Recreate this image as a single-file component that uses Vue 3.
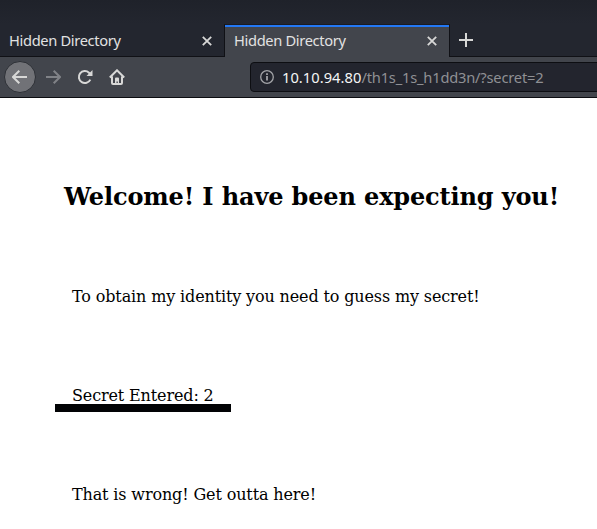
<script setup>
const tabs = [
  { title: 'Hidden Directory', active: false },
  { title: 'Hidden Directory', active: true },
]
</script>

<template>
  <div class="window">
    <header class="tabstrip">
      <div v-for="(tab, i) in tabs" :key="i" class="tab" :class="{ active: tab.active }">
        <span class="title">{{ tab.title }}</span>
        <svg class="close" width="10" height="10" viewBox="0 0 10 10">
          <path d="M.8.8l8.4 8.4M9.2.8L.8 9.2" />
        </svg>
      </div>
      <svg class="plus" width="14" height="14" viewBox="0 0 14 14"><path d="M7 0v14M0 7h14" /></svg>
    </header>

    <nav class="toolbar">
      <button class="back" aria-label="Back">
        <svg width="16" height="16" viewBox="0 0 16 16"><path d="M15 8H1.5M7.3 1.7L1 8l6.3 6.3" /></svg>
      </button>
      <svg class="forward" width="16" height="16" viewBox="0 0 16 16"><path d="M1 8h13.500M8.700 1.700L15 8l-6.300 6.300" /></svg>
      <svg class="reload" width="16" height="16" viewBox="0 0 16 16">
        <path d="M13.300 10.600A6 6 0 1 1 12 3.700L13.500 5.200" />
        <path class="solid" d="M15.500 1v6h-6z" />
      </svg>
      <svg class="home" width="16" height="16" viewBox="0 0 16 16">
        <path d="M.8 8.500L8 1.300l7.200 7.200M3 7.500V14q0 1 1 1h8q1 0 1-1V7.500" />
        <path class="solid" d="M6 15V9.500Q6 8.500 7 8.500h2q1 0 1 1V15H8.800v-2.500H7.500V15z" />
      </svg>
      <div class="url">
        <svg class="info" width="14" height="14" viewBox="0 0 14 14">
          <circle cx="7" cy="7" r="6.300" />
          <path d="M7 6v4.500M7 3.200v1.700" />
        </svg>
        <span class="host">10.10.94.80</span><span class="path">/th1s_1s_h1dd3n/?secret=2</span>
      </div>
    </nav>

    <main class="page">
      <h1>Welcome! I have been expecting you!</h1>
      <p>To obtain my identity you need to guess my secret!</p>
      <p class="secret">Secret Entered: 2</p>
      <p>That is wrong! Get outta here!</p>
    </main>
  </div>
</template>

<style>
body { background: #fff; overflow: hidden; }
</style>

<style scoped>
.window { width: 597px; height: 529px; overflow: hidden; background: #fff; }
svg { display: block; flex: none; fill: none; stroke: #d8d8d7; stroke-width: 2; }
.tabstrip {
  box-sizing: border-box;
  height: 57px;
  padding-top: 24px;
  display: flex;
  background: linear-gradient(#1f222a, #23262f 24px);
  border-bottom: 1px solid #101116;
  font: 14.67px "Noto Sans", sans-serif;
  color: #e2e2e2;
}
.tab {
  box-sizing: border-box;
  width: 224px;
  height: 32px;
  padding: 2px 12px 0 9px;
  display: flex;
  align-items: center;
  justify-content: space-between;
}
.tab.active {
  width: 226px;
  height: 33px;
  padding: 0 12px 0 9px;
  border: 1px solid #101116;
  border-top: 1px solid #191a22;
  border-bottom: 0;
  background: linear-gradient(#2378f4 2px, #42454c 2px);
}
.close { stroke-width: 1.800; }
.title { padding-bottom: 2px; line-height: 20px; letter-spacing: -0.34px; white-space: nowrap; }
.plus { margin: 9px 0 0 9px; }
.toolbar {
  box-sizing: border-box;
  height: 41px;
  padding-left: 4px;
  display: flex;
  align-items: center;
  background: #42454c;
  border-bottom: 1px solid #0c0d11;
}
.back {
  box-sizing: border-box;
  width: 32px;
  height: 32px;
  flex: none;
  padding: 0;
  display: flex;
  align-items: center;
  justify-content: center;
  border: 1px solid #2d3036;
  border-radius: 50%;
  background: #717277;
}
.forward { margin-left: 9px; stroke: #808287; }
.reload { margin-left: 16px; }
.home { margin-left: 16px; }
.solid { fill: #d8d8d7; stroke: none; }
.url {
  box-sizing: border-box;
  width: 360px;
  height: 30px;
  flex: none;
  margin-left: 125px;
  padding-left: 9px;
  display: flex;
  align-items: center;
  border: 1px solid #0d0e12;
  border-radius: 4px;
  background: #23252e;
  font: 14.67px "Noto Sans", sans-serif;
  white-space: nowrap;
}
.info { margin-right: 8px; stroke: #a3a4a8; stroke-width: 1.300; }
.info path { stroke-width: 1.800; }
.host { color: #f5f5f5; letter-spacing: 0.05px; }
.path { color: #8f9094; letter-spacing: -0.19px; }
.page {
  padding: 85px 0 0 64px;
  color: #000;
  font: 16px/19px "DejaVu Serif", serif;
  letter-spacing: -0.135px;
}
h1 { margin: 0 0 76px; font-size: 24px; line-height: 28px; white-space: nowrap; }
p { margin: 0 0 80px 8px; white-space: nowrap; }
.secret { position: relative; }
.secret::after {
  content: "";
  position: absolute;
  left: -17px;
  top: 18px;
  width: 176px;
  height: 8px;
  background: #020305;
}
</style>
